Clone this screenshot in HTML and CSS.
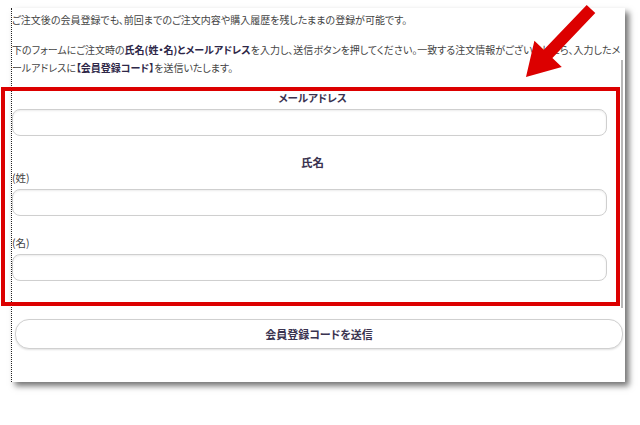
FILE: index.html
```html
<!DOCTYPE html>
<html lang="ja">
<head>
<meta charset="utf-8">
<title>会員登録</title>
<link rel="stylesheet" href="styles.css">
</head>
<body>
<div class="panel">
  <div class="intro">
    <p>ご注文後の会員登録でも、前回までのご注文内容や購入履歴を残したままの登録が可能です。</p>
    <p>下のフォームにご注文時の<b>氏名(姓・名)とメールアドレス</b>を入力し、送信ボタンを押してください。一致する注文情報がございましたら、入力したメ<br>ールアドレスに<b>【会員登録コード】</b>を送信いたします。</p>
  </div>
  <form class="form">
    <div class="label center">メールアドレス</div>
    <div class="field"></div>
    <div class="label center name">氏名</div>
    <div class="label sub">(姓)</div>
    <div class="field"></div>
    <div class="label sub gap">(名)</div>
    <div class="field"></div>
    <div class="button">会員登録コードを送信</div>
  </form>
  <div class="scroll"></div>
</div>
<div class="highlight"></div>
<svg class="arrow" width="640" height="425" viewBox="0 0 640 425">
  <polygon fill="#dc0000" points="586.7,4.9 595.3,13.1 552.4,58 561.8,67 526,77 534.4,40.8 543.8,49.8"/>
</svg>
</body>
</html>
```

FILE: styles.css
```css
html, body {
  margin: 0;
  padding: 0;
  background: #fff;
}
body {
  width: 640px;
  height: 425px;
  overflow: hidden;
  position: relative;
  font-family: "Noto Sans CJK JP", "Noto Sans", sans-serif;
  font-feature-settings: "palt";
  color: #444;
}
.panel {
  position: relative;
  margin: 8px 0 0 11px;
  width: 614px;
  height: 374px;
  box-sizing: border-box;
  border-left: 1px dotted #222;
  background: #fff;
  box-shadow: 4px 4px 6px rgba(0, 0, 0, 0.55);
  padding-top: 3px;
}
.intro p {
  margin: 0;
  font-size: 10px;
  line-height: 18px;
  white-space: nowrap;
}
.intro p + p {
  margin-top: 12px;
}
.intro b {
  color: #2e2748;
}
.form {
  margin: 13px 0 0 0;
  display: flex;
  flex-direction: column;
  align-items: flex-start;
}
.label {
  font-size: 10.5px;
  line-height: 16px;
  color: #444;
}
.center {
  align-self: stretch;
  text-align: center;
  font-weight: bold;
  color: #3a3350;
  padding-right: 12px;
}
.name {
  margin-top: 18px;
  font-size: 11.5px;
}
.gap {
  margin-top: 19px;
}
.field {
  margin-top: 3px;
  width: 595px;
  height: 27px;
  box-sizing: border-box;
  border: 1px solid #cfcfcf;
  border-radius: 8px;
  background: #fff;
  box-shadow: inset 0 1px 2px rgba(0, 0, 0, 0.08);
}
.button {
  margin: 38px 0 0 3px;
  width: 608px;
  height: 30px;
  box-sizing: border-box;
  border: 1px solid #d0d0d0;
  border-radius: 14px;
  background: #fff;
  box-shadow: 0 1px 2px rgba(0, 0, 0, 0.12);
  display: flex;
  align-items: center;
  justify-content: center;
  font-size: 11px;
  font-weight: bold;
  color: #3a3350;
}
.scroll {
  position: absolute;
  left: 609px;
  top: 52px;
  width: 2px;
  height: 248px;
  background: #b8b8b8;
}
.highlight {
  position: absolute;
  left: 1px;
  top: 87px;
  width: 619px;
  height: 219px;
  box-sizing: border-box;
  border: 4px solid #dc0000;
}
.arrow {
  position: absolute;
  left: 0;
  top: 0;
}
```
